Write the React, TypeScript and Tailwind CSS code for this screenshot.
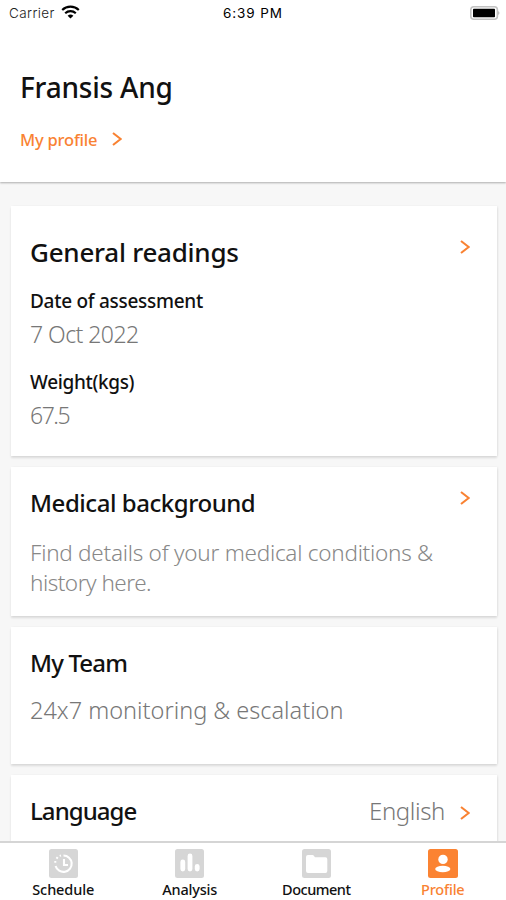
import type { ReactNode } from "react";

const TABS = [
  { label: "Schedule", icon: <ScheduleIcon />, active: false, tracking: "tracking-[-0.1px]" },
  { label: "Analysis", icon: <AnalysisIcon />, active: false, tracking: "tracking-[-0.2px]" },
  { label: "Document", icon: <DocumentIcon />, active: false, tracking: "tracking-[-0.5px]" },
  { label: "Profile", icon: <ProfileIcon />, active: true, tracking: "tracking-[-0.2px]" },
];

function Chevron() {
  return (
    <svg width="10" height="14" viewBox="0 0 10 14" fill="none" className="shrink-0">
      <path d="M1 1L8.7 7L1 13" stroke="#f98232" strokeWidth="2.1" />
    </svg>
  );
}

function ScheduleIcon() {
  return (
    <svg width="29" height="29" viewBox="0 0 29 29" fill="none">
      <rect width="29" height="29" rx="2.5" fill="#d6d6d6" />
      <path d="M14.5 6.5A8.2 8.2 0 1 1 6.6 17" stroke="#fff" strokeWidth="2.1" />
      <path d="M6.3 13.8V12M7.5 9.6L8.7 8.1M10.7 6.9L12 6.5" stroke="#fff" strokeWidth="2" />
      <path d="M15 10V16H19" stroke="#fff" strokeWidth="2.1" />
    </svg>
  );
}

function AnalysisIcon() {
  return (
    <svg width="29" height="29" viewBox="0 0 29 29" fill="none">
      <rect width="29" height="29" rx="2.5" fill="#d6d6d6" />
      <path d="M7.8 13V20M15 7V20M22.2 17.3V20" stroke="#fff" strokeWidth="4.8" strokeLinecap="round" />
    </svg>
  );
}

function DocumentIcon() {
  return (
    <svg width="29" height="29" viewBox="0 0 29 29" fill="none">
      <rect width="29" height="29" rx="2.5" fill="#d6d6d6" />
      <path
        d="M4 8Q4 6 6 6H10.5Q11.5 6 12 7L13 8.3H23.5Q25.3 8.3 25.3 10.3V22Q25.3 24 23.5 24H6Q4 24 4 22Z"
        fill="#fff"
      />
    </svg>
  );
}

function ProfileIcon() {
  return (
    <svg width="30" height="29" viewBox="0 0 30 29" fill="none">
      <rect width="30" height="29" rx="2.5" fill="#fb8332" />
      <circle cx="15" cy="10.4" r="4.7" fill="#fff" />
      <ellipse cx="14.8" cy="20" rx="7.6" ry="3.3" fill="#fff" />
    </svg>
  );
}

function StatusBar() {
  return (
    <div className="flex h-7 items-center pl-[9px] pr-1.5 text-[13.5px] leading-[26px]">
      <div className="flex flex-1 items-center gap-1.5 font-['Inter',sans-serif] font-light text-[#222]">
        <span className="-mt-0.5 tracking-[0.4px]">Carrier</span>
        <svg width="19" height="14" viewBox="0 0 19 14" fill="none" className="-mt-1">
          <path d="M1.2 5C5.8 .6 13.2 .6 17.8 5" stroke="#000" strokeWidth="2.2" />
          <path d="M4.2 8.2C7.2 5.4 11.8 5.4 14.8 8.2" stroke="#000" strokeWidth="2.2" />
          <path d="M6.6 10.8Q9.5 8.4 12.4 10.8L9.5 13.6Z" fill="#000" />
        </svg>
      </div>
      <span className="-mt-0.5 mr-[3px] font-['Inter',sans-serif] tracking-[0.9px] text-black">6:39 PM</span>
      <div className="flex flex-1 justify-end">
        <svg width="30" height="14" viewBox="0 0 30 14" fill="none" className="-mt-0.5">
          <rect x=".8" y=".8" width="26.6" height="12.4" rx="3" stroke="#c2c2c2" strokeWidth="1.6" />
          <rect x="3" y="2.7" width="22" height="8.6" rx=".8" fill="#000" />
          <path d="M28.3 5Q30.5 7 28.3 9Z" fill="#aaa" />
        </svg>
      </div>
    </div>
  );
}

function Card({ className, children }: { className: string; children: ReactNode }) {
  return (
    <section
      className={`shrink-0 bg-white pl-[19px] pr-[27px] shadow-[0_2px_2px_rgba(0,0,0,0.11),1px_0_2px_rgba(0,0,0,0.05)] ${className}`}
    >
      {children}
    </section>
  );
}

export default function App() {
  return (
    <div className="flex h-[900px] w-[506px] flex-col overflow-hidden bg-[#f7f7f7] font-['Noto_Sans',sans-serif] text-[#111]">
      <header className="h-[182px] shrink-0 bg-white shadow-[0_1px_2px_rgba(0,0,0,0.3)]">
        <StatusBar />
        <div className="px-5 pt-[39px]">
          <h1 className="text-[28px] font-medium leading-10 tracking-[-0.2px]">Fransis Ang</h1>
          <div className="mt-[21px] flex items-center gap-[15px] text-[16.5px] font-medium leading-6 text-[#f98232]">
            <span className="tracking-[-0.2px]">My profile</span>
            <span className="-mt-0.5"><Chevron /></span>
          </div>
        </div>
      </header>

      <main className="flex min-h-0 flex-1 flex-col gap-[11px] overflow-hidden pl-[11px] pr-[9px] pt-6">
        <Card className="h-[250px] pt-[26px]">
          <div className="flex items-start justify-between">
            <h2 className="text-[26px] font-medium leading-10 tracking-[-0.25px]">General readings</h2>
            <span className="pt-2"><Chevron /></span>
          </div>
          <h3 className="mt-[15px] text-[19px] font-medium leading-7 tracking-[-0.28px]">Date of assessment</h3>
          <p className="mt-[3px] text-[23px] font-light leading-8 tracking-[-0.55px] text-[#777]">7 Oct 2022</p>
          <h3 className="mt-[18px] text-[19px] font-medium leading-7 tracking-[-0.35px]">Weight(kgs)</h3>
          <p className="mt-[3px] text-[23px] font-light leading-8 tracking-[-1.5px] text-[#777]">67.5</p>
        </Card>

        <Card className="h-[149px] pt-4">
          <div className="flex items-start justify-between">
            <h2 className="text-[24px] font-medium leading-10 tracking-[-0.45px]">Medical background</h2>
            <span className="pt-2"><Chevron /></span>
          </div>
          <p className="mt-[15px] text-[22.5px] font-light leading-[30px] text-[#888]">
            <span className="whitespace-nowrap tracking-[-0.25px]">Find details of your medical conditions &amp;</span>
            <br />
            <span className="tracking-[-0.5px]">history here.</span>
          </p>
        </Card>

        <Card className="h-[137px] pt-4">
          <h2 className="text-[24px] font-medium leading-10 tracking-[-0.85px]">My Team</h2>
          <p className="mt-[11px] whitespace-nowrap text-[23.5px] font-light leading-8 text-[#777]">
            24x7 monitoring &amp; escalation
          </p>
        </Card>

        <Card className="flex h-[90px] items-start justify-between pt-4">
          <h2 className="text-[24px] font-medium leading-10 tracking-[-0.95px]">Language</h2>
          <div className="flex items-center gap-[15px] text-[24px] font-light leading-10 text-[#777]">
            <span className="tracking-[-0.4px]">English</span>
            <span className="mt-1"><Chevron /></span>
          </div>
        </Card>
      </main>

      <nav className="z-10 grid h-[59px] shrink-0 grid-cols-4 border-t-2 border-[#d5d5d5] bg-white pt-1.5">
        {TABS.map((tab) => (
          <div
            key={tab.label}
            className={`flex flex-col items-center text-[14.5px] font-medium leading-[22px] ${
              tab.active ? "text-[#f98232]" : "text-[#111]"
            }`}
          >
            {tab.icon}
            <span className={tab.tracking}>{tab.label}</span>
          </div>
        ))}
      </nav>
    </div>
  );
}
